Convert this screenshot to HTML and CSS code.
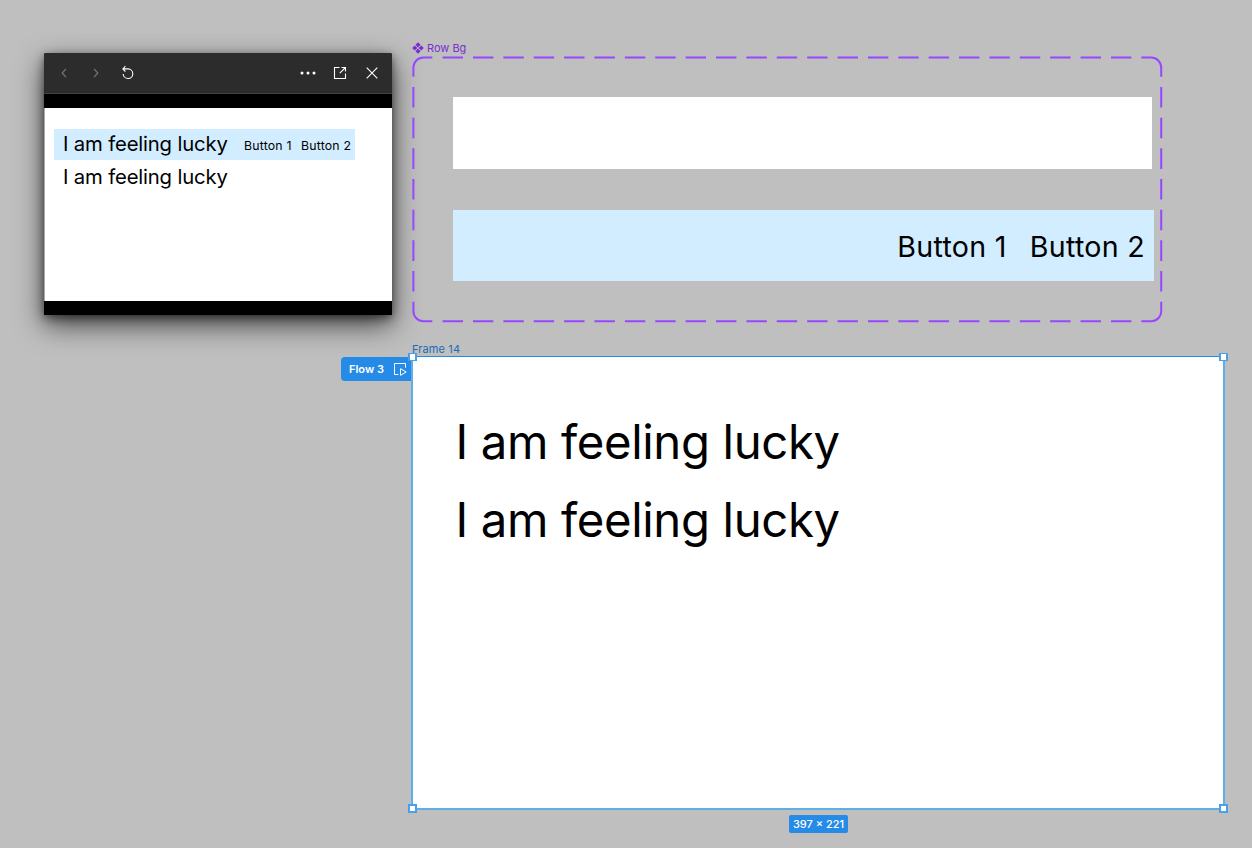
FILE: index.html
```
<!DOCTYPE html>
<html lang="en">
<head>
  <meta charset="utf-8">
  <title>Row hover prototype</title>
  <link rel="stylesheet" href="styles.css">
</head>
<body>
  <main class="canvas">
    <section class="preview">
      <div class="toolbar">
        <svg class="icon dim" viewBox="0 0 16 16"><path d="M9.9 4L6.1 8l3.8 4"/></svg>
        <svg class="icon dim" viewBox="0 0 16 16"><path d="M6.1 4l3.8 4-3.8 4"/></svg>
        <svg class="icon" viewBox="0 0 16 16"><path d="M5.4 1.2L2.9 3.9l2.5 2.6M2.9 3.9H8a4.8 4.8 0 1 1-4.8 5"/></svg>
        <svg class="icon more" viewBox="0 0 16 16"><circle cx="2" cy="8" r="1.5"/><circle cx="8" cy="8" r="1.5"/><circle cx="14" cy="8" r="1.5"/></svg>
        <svg class="icon" viewBox="0 0 16 16"><path d="M7.5 2.5h-5v11h11v-5M9.5 2.5h4v4M13.5 2.5L7.8 8.2"/></svg>
        <svg class="icon" viewBox="0 0 16 16"><path d="M2.7 2.7l10.6 10.6M13.3 2.7L2.7 13.3"/></svg>
      </div>
      <div class="screen">
        <div class="row active">
          <span class="title">I am feeling lucky</span>
          <span class="btn">Button 1</span>
          <span class="btn">Button 2</span>
        </div>
        <div class="row">
          <span class="title">I am feeling lucky</span>
        </div>
      </div>
    </section>

    <section class="component">
      <div class="component-name">
        <svg viewBox="0 0 12 12"><path d="M6 .2l2.6 2.6L6 5.4 3.4 2.8zM6 6.6l2.6 2.6L6 11.8 3.4 9.2zM2.8 3.4L5.4 6 2.8 8.6.2 6zM9.2 3.4L11.8 6 9.2 8.6 6.6 6z"/></svg>
        <span>Row Bg</span>
      </div>
      <svg class="dashes" viewBox="0 0 752 268">
        <path d="M2.4 20.7V11.5a10 10 0 0 1 10-10H21.3M730.3 1.5h9.9a10 10 0 0 1 10 10v9.2M750.2 245.7v9.5a10 10 0 0 1-10 10h-9.9M21.3 265.2h-8.9a10 10 0 0 1-10-10v-9.5"/>
        <path class="horizontal" d="M31.6 1.5h690M31.6 265.2h690"/>
        <path class="vertical" d="M2.4 31v206M750.2 31v206"/>
      </svg>
      <div class="variants">
        <div class="variant plain"></div>
        <div class="variant hovered">
          <span>Button 1</span>
          <span>Button 2</span>
        </div>
      </div>
    </section>

    <div class="frame-name">Frame 14</div>
    <div class="flow">
      <span>Flow 3</span>
      <svg viewBox="0 0 14 14"><path d="M5.4 12.5H1.5v-11h11v4.2M7.5 6.7v6.6l5.7-3.3z"/></svg>
    </div>
    <section class="frame">
      <p>I am feeling lucky</p>
      <p>I am feeling lucky</p>
      <i class="handle nw"></i>
      <i class="handle ne"></i>
      <i class="handle sw"></i>
      <i class="handle se"></i>
    </section>
    <div class="size">397 × 221</div>
  </main>
</body>
</html>
```
FILE: styles.css
```
* { box-sizing: border-box; }

body {
  margin: 0;
  background: #bfbfbf;
  color: #000;
  font-family: Inter, "Liberation Sans", sans-serif;
}
.canvas {
  position: relative;
  width: 1252px;
  height: 848px;
  overflow: hidden;
}
svg {
  display: block;
  fill: none;
}

/* prototype preview window */
.preview {
  position: absolute;
  left: 44px;
  top: 53px;
  width: 348px;
  height: 262px;
  display: flex;
  flex-direction: column;
  padding-bottom: 14px;
  background: #000;
  border-radius: 2px 2px 0 0;
  box-shadow: 0 10px 28px rgba(0,0,0,.65), 0 3px 10px rgba(0,0,0,.5);
}
.toolbar {
  display: flex;
  align-items: center;
  gap: 16px;
  height: 41px;
  margin-bottom: 14px;
  padding: 0 12px;
  background: #2c2c2c;
  border-bottom: 1px solid #444;
  border-radius: 2px 2px 0 0;
}
.icon {
  width: 16px;
  height: 16px;
  stroke: #fff;
  stroke-width: 1.1;
}
.icon.dim { stroke: #777; }
.icon.more {
  margin-left: auto;
  fill: #fff;
  stroke: none;
}
.screen {
  flex: 1;
  padding: 21px 0 0 9px;
  background: #fff;
  border-left: 1px solid #aaa;
}
.row {
  display: flex;
  align-items: center;
  width: 301px;
  height: 31px;
  margin-bottom: 2px;
  padding-left: 9px;
  white-space: nowrap;
}
.row.active { background: #d2edff; }
.row .title {
  flex: none;
  width: 181px;
  padding-bottom: 3px;
  font-size: 20.3px;
  letter-spacing: -.16px;
}
.row .btn {
  flex: none;
  width: 57px;
  padding-top: 1px;
  font-size: 12.3px;
  letter-spacing: .2px;
}

/* component set */
.component {
  position: absolute;
  left: 411px;
  top: 56px;
  width: 752px;
  height: 268px;
}
.component-name {
  position: absolute;
  left: 1px;
  top: -15px;
  display: flex;
  align-items: center;
  gap: 3px;
  height: 14px;
  color: #7b2fd0;
  font-size: 11px;
}
.component-name svg {
  width: 12px;
  height: 12px;
  fill: #7b2fd0;
}
.dashes {
  position: absolute;
  width: 752px;
  height: 268px;
  stroke: #9747ff;
  stroke-width: 2;
}
.horizontal { stroke-dasharray: 20.4 9.98; }
.vertical { stroke-dasharray: 20.6 10.07; }
.variants {
  display: flex;
  flex-direction: column;
  gap: 41px;
  padding: 41px 0 0 42px;
}
.variant {
  width: 699px;
  height: 72px;
  background: #fff;
}
.hovered {
  display: flex;
  align-items: center;
  justify-content: flex-end;
  gap: 23px;
  width: 701px;
  height: 71px;
  padding: 1px 9px 0 0;
  background: #d2edff;
  font-size: 28.6px;
  letter-spacing: .3px;
}

/* selected frame */
.frame-name {
  position: absolute;
  left: 412px;
  top: 342px;
  color: #1c6bb8;
  font-size: 11px;
  line-height: 14px;
  letter-spacing: .12px;
}
.flow {
  position: absolute;
  left: 341px;
  top: 357px;
  width: 71px;
  height: 24px;
  display: flex;
  align-items: center;
  justify-content: space-between;
  padding: 0 5px 0 8px;
  background: #258be6;
  border-radius: 4px 0 0 4px;
  color: #fff;
  font-size: 11px;
  font-weight: 600;
}
.flow svg {
  width: 14px;
  height: 14px;
  stroke: #fff;
}
.frame {
  position: absolute;
  left: 411px;
  top: 356px;
  width: 814px;
  height: 454px;
  padding: 46px 0 0 42.5px;
  background: #fff;
  border: 2px solid #5fade9;
  border-top: 1px solid #258be6;
}
.frame p {
  margin: 0;
  font-size: 47.3px;
  line-height: 78px;
  letter-spacing: -.36px;
  white-space: nowrap;
}
.handle {
  position: absolute;
  width: 9px;
  height: 9px;
  background: #fff;
  border: 2px solid #4a9fe6;
}
.nw, .sw { left: -5px; }
.ne, .se { right: -5px; }
.nw, .ne {
  top: -4px;
  height: 8px;
  border-width: 1px 2px;
}
.sw, .se { bottom: -5px; }
.size {
  position: absolute;
  left: 789px;
  top: 815px;
  width: 59px;
  height: 18px;
  background: #258be6;
  border-radius: 2px;
  color: #fff;
  font-size: 11px;
  font-weight: 500;
  line-height: 19px;
  text-align: center;
}
```
